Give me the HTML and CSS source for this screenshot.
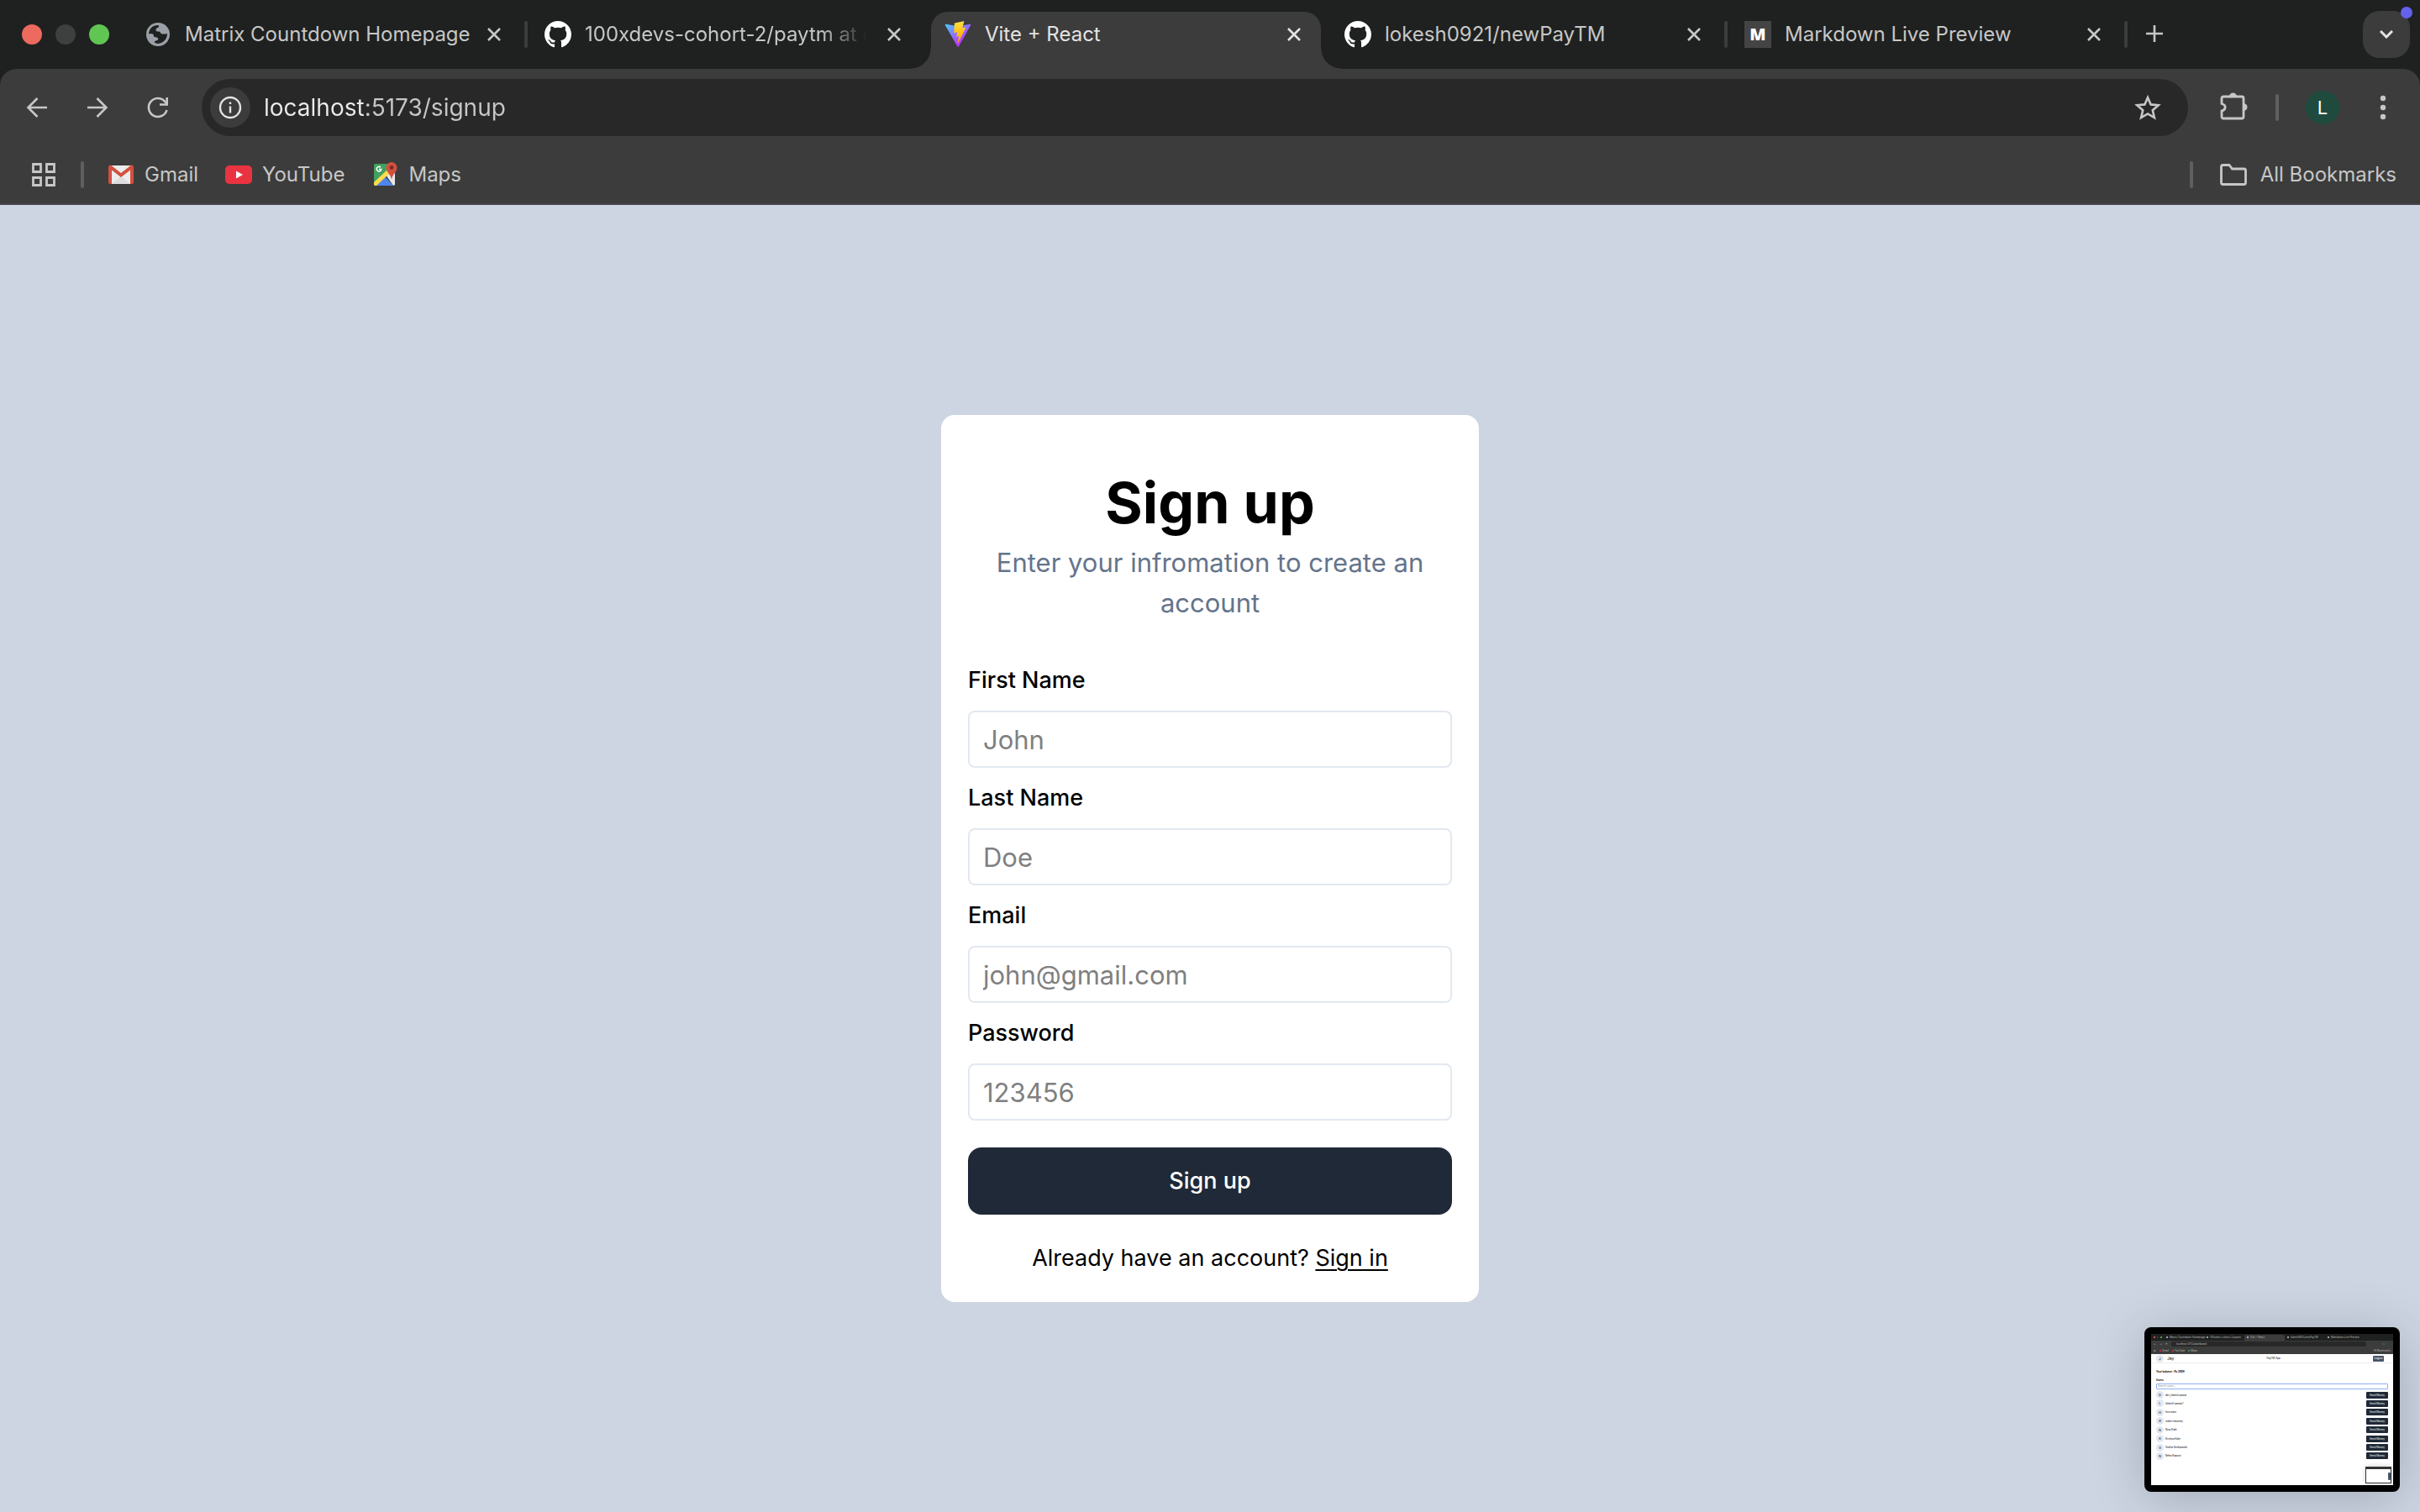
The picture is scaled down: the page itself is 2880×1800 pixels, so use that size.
FILE: index.html
```html
<!DOCTYPE html>
<html lang="en">
<head>
<meta charset="utf-8">
<title>Vite + React</title>
<link rel="stylesheet" href="styles.css">
</head>
<body>
<svg class="defs" aria-hidden="true">
  <defs>
    <linearGradient id="vite-a" x1="6" y1="33" x2="235" y2="344" gradientUnits="userSpaceOnUse"><stop stop-color="#41d1ff"/><stop offset="1" stop-color="#bd34fe"/></linearGradient>
    <linearGradient id="vite-b" x1="194" y1="8" x2="236" y2="292" gradientUnits="userSpaceOnUse"><stop stop-color="#ffea83"/><stop offset=".08" stop-color="#ffdd35"/><stop offset="1" stop-color="#ffa800"/></linearGradient>
    <symbol id="close" viewBox="0 0 16 16"><path d="M1 1 15 15M15 1 1 15" fill="none" stroke="currentColor" stroke-width="2.6"/></symbol>
    <symbol id="github" viewBox="0 0 16 16"><path fill="#fff" d="M8 0C3.58 0 0 3.58 0 8c0 3.54 2.29 6.53 5.47 7.59.4.07.55-.17.55-.38 0-.19-.01-.82-.01-1.49-2.01.37-2.53-.49-2.69-.94-.09-.23-.48-.94-.82-1.13-.28-.15-.68-.52-.01-.53.63-.01 1.08.58 1.23.82.72 1.21 1.87.87 2.33.66.07-.52.28-.87.51-1.07-1.78-.2-3.64-.89-3.64-3.95 0-.87.31-1.59.82-2.15-.08-.2-.36-1.02.08-2.12 0 0 .67-.21 2.2.82.64-.18 1.32-.27 2-.27.68 0 1.36.09 2 .27 1.53-1.04 2.2-.82 2.2-.82.44 1.1.16 1.92.08 2.12.51.56.82 1.27.82 2.15 0 3.07-1.87 3.75-3.65 3.95.29.25.54.73.54 1.48 0 1.07-.01 1.93-.01 2.2 0 .21.15.46.55.38A8.01 8.01 0 0 0 16 8c0-4.42-3.58-8-8-8z"/></symbol>
    <symbol id="vite" viewBox="0 0 410 404"><path fill="url(#vite-a)" d="M399.6 59.5 215.6 388.5c-3.8 6.8-13.5 6.9-17.4.1L10.6 59.6C6.4 52.2 12.7 43.3 21 44.8l184.2 32.9c1.2.2 2.4.2 3.6 0l180.3-32.9c8.3-1.5 14.7 7.3 10.5 14.7Z"/><path fill="url(#vite-b)" d="M293 1.6 156.8 28.3c-2.2.4-3.9 2.3-4 4.6l-8.4 141.4c-.2 3.4 2.9 6 6.1 5.2l37.9-8.8c3.6-.8 6.8 2.3 6 5.9l-11.2 55.2c-.8 3.7 2.7 6.9 6.3 5.8l23.4-7.1c3.7-1.1 7.2 2 6.4 5.8l-17.9 86.6c-1.1 5.4 6.1 8.3 9.1 3.7l2-3.1L323.5 102c1.8-3.7-1.4-7.9-5.5-7.1l-39 7.6c-3.7.7-6.8-2.7-5.7-6.3L298.7 7.9c1.1-3.6-2.1-7-5.7-6.3Z"/></symbol>
  </defs>
</svg>

<header class="browser">
  <nav class="tabstrip" aria-label="Tabs">
    <div class="lights"><span class="light light-red"></span><span class="light light-off"></span><span class="light light-green"></span></div>
    <div class="tab">
      <svg class="favicon" viewBox="0 0 32 32"><circle cx="16" cy="16" r="14" fill="#9aa0a6"/><path fill="#1f2120" d="M5 15.5C5.400 9 10 5 15.500 5c1.500 0 2.500 1.500 1 2.500-1.500 1-3 1-3 3s1.500 2 4 2c1.500 0 1.500 3 3.500 3h4.500c2-.5 1.500-1 1.300-2 1.200 7-4 13-11 13.500-1-.5-3.500-.5-4-1.500-.2-1.600 1.700-2 3.200-2.500 2-.8 1.500-3-.5-3.500-2-.3-3.500 0-3.500-1.500 0-2-1-3-3.500-3-1.500 0-2 .8-2.500.5Z"/></svg>
      <span class="tab-title">Matrix Countdown Homepage</span>
      <button class="tab-close" aria-label="Close tab"><svg><use href="#close"/></svg></button>
      <span class="divider"></span>
    </div>
    <div class="tab">
      <svg class="favicon"><use href="#github"/></svg>
      <span class="tab-title tab-title-long">100xdevs-cohort-2/paytm at c</span>
      <button class="tab-close" aria-label="Close tab"><svg><use href="#close"/></svg></button>
      <span class="divider divider-none"></span>
    </div>
    <div class="tab tab-active">
      <svg class="favicon"><use href="#vite"/></svg>
      <span class="tab-title">Vite + React</span>
      <button class="tab-close" aria-label="Close tab"><svg><use href="#close"/></svg></button>
      <span class="divider divider-none"></span>
    </div>
    <div class="tab">
      <svg class="favicon"><use href="#github"/></svg>
      <span class="tab-title">lokesh0921/newPayTM</span>
      <button class="tab-close" aria-label="Close tab"><svg><use href="#close"/></svg></button>
      <span class="divider"></span>
    </div>
    <div class="tab">
      <span class="favicon favicon-m">M</span>
      <span class="tab-title">Markdown Live Preview</span>
      <button class="tab-close" aria-label="Close tab"><svg><use href="#close"/></svg></button>
      <span class="divider"></span>
    </div>
    <button class="new-tab" aria-label="New tab"><svg viewBox="0 0 20 20"><path d="M10 0v20M0 10h20" stroke="currentColor" stroke-width="2.600"/></svg></button>
    <button class="tab-search" aria-label="Search tabs"><svg viewBox="0 0 16 10"><path d="m1 1 7 7 7-7" fill="none" stroke="currentColor" stroke-width="3"/></svg><span class="dot"></span></button>
  </nav>

  <div class="toolbar">
    <button class="tool" aria-label="Back"><svg viewBox="0 0 32 32"><path d="M28 16H6M16.500 5 5.500 16l11 11" fill="none" stroke="currentColor" stroke-width="2.600"/></svg></button>
    <button class="tool" aria-label="Forward"><svg viewBox="0 0 32 32"><path d="M4 16h22M15.500 5l11 11-11 11" fill="none" stroke="currentColor" stroke-width="2.600"/></svg></button>
    <button class="tool tool-reload" aria-label="Reload"><svg viewBox="0 0 32 32"><path d="M26.500 19A11 11 0 1 1 24 8.500l2 2.500" fill="none" stroke="currentColor" stroke-width="2.600"/><path d="M26.700 4v8.500H18" fill="none" stroke="currentColor" stroke-width="2.600"/></svg></button>
    <div class="omnibox">
      <button class="site-info" aria-label="View site information"><svg viewBox="0 0 28 28"><circle cx="14" cy="14" r="12" fill="none" stroke="currentColor" stroke-width="2.400"/><path d="M14 12.500v8M14 7.500v2.600" stroke="currentColor" stroke-width="2.400"/></svg></button>
      <input class="url" type="text" aria-label="Address" value="localhost:5173/signup">
      <button class="tool" aria-label="Bookmark this tab"><svg viewBox="0 0 32 32"><path d="m16 4 3.600 8.400 9.100.8-6.900 6 2.100 8.900L16 23.400l-7.900 4.700 2.100-8.900-6.900-6 9.100-.8z" fill="none" stroke="currentColor" stroke-width="2.600"/></svg></button>
    </div>
    <button class="tool tool-ext" aria-label="Extensions"><svg viewBox="0 0 36 36"><path d="M4 7a2 2 0 0 1 2-2h22a2 2 0 0 1 2 2v22a2 2 0 0 1-2 2H6a2 2 0 0 1-2-2v-7c5-1 6-7 0-8.500Z" fill="none" stroke="currentColor" stroke-width="2.800"/><path d="M13 5c0-6 9-6 9 0ZM30 13c6 0 6 9 0 9Z" fill="currentColor"/></svg></button>
    <span class="divider divider-light"></span>
    <button class="avatar" aria-label="Profile">L</button>
    <button class="tool tool-menu" aria-label="Menu"><svg viewBox="0 0 32 32"><circle cx="16" cy="5" r="3.200" fill="currentColor"/><circle cx="16" cy="16" r="3.200" fill="currentColor"/><circle cx="16" cy="27" r="3.200" fill="currentColor"/></svg></button>
  </div>

  <nav class="bookmarks" aria-label="Bookmarks">
    <button class="apps" aria-label="Apps"><svg viewBox="0 0 28 28"><path d="M1.500 1.500h9v9h-9zM17.500 1.500h9v9h-9zM1.500 17.500h9v9h-9zM17.500 17.500h9v9h-9z" fill="none" stroke="currentColor" stroke-width="2.800"/></svg></button>
    <span class="divider divider-light"></span>
    <a class="bookmark" href="#"><svg viewBox="0 0 32 32"><path fill="#ececec" d="M3 5h26v22H3z"/><path fill="#dcdcdc" d="M5 27 16 18l11 9z"/><path fill="#d3503f" d="M1 7c0-2 2-3 3.500-2L16 14 27.500 5C29 4 31 5 31 7v18c0 1-1 2-2 2h-2V10.500L16 19 5 10.500V27H3c-1 0-2-1-2-2z"/></svg>Gmail</a>
    <a class="bookmark" href="#"><svg viewBox="0 0 32 32"><rect y="5" width="32" height="22" rx="5" fill="#ea3340"/><path fill="#fff" d="m13 11.500 8 4.500-8 4.500z"/></svg>YouTube</a>
    <a class="bookmark" href="#"><svg viewBox="0 0 32 32"><path fill="#43a060" d="M4 3h21v8L5 28H3V4z"/><path fill="#e8e8e8" d="m17 16 8-7 3 4v15l-2 1z"/><path fill="#4f86ec" d="m5 29 11-11 10 11z"/><path fill="#fbdc4b" d="M3 25 19 10l3 4L6 29H4l-1-1z"/><path fill="none" stroke="#fff" stroke-width="1.500" d="M11 7.200a2.800 2.800 0 1 0 .8 2.300H9"/><path fill="#d3503f" d="M24 1a6.500 6.500 0 0 1 6.500 6.500C30.500 13 25 15 24 22c-1-7-6.500-9-6.500-14.500A6.500 6.500 0 0 1 24 1z"/><circle cx="24" cy="7.500" r="2.400" fill="#7c2b24"/></svg>Maps</a>
    <span class="divider divider-light push"></span>
    <a class="bookmark bookmark-all" href="#"><svg viewBox="0 0 32 32"><path d="M1.500 6.500c0-1.500.5-2 2-2H11L14.500 9H28.500c1.500 0 2 .5 2 2v14.500c0 1.500-.5 2-2 2h-25c-1.500 0-2-.5-2-2z" fill="none" stroke="currentColor" stroke-width="2.800"/></svg>All Bookmarks</a>
  </nav>
</header>

<main class="page">
  <form class="card">
    <h1>Sign up</h1>
    <p class="subtitle">Enter your infromation to create an account</p>
    <label for="first">First Name</label>
    <input id="first" type="text" placeholder="John">
    <label for="last">Last Name</label>
    <input id="last" type="text" placeholder="Doe">
    <label for="email">Email</label>
    <input id="email" type="email" placeholder="john@gmail.com">
    <label for="password">Password</label>
    <input id="password" type="password" placeholder="123456">
    <button class="submit" type="button">Sign up</button>
    <p class="footnote">Already have an account? <a href="#">Sign in</a></p>
  </form>
</main>

<aside class="thumb" aria-label="Screenshot preview">
  <div class="mini">
    <div class="mini-tabs">
      <span class="mini-lights"><i class="light-red"></i><i class="light-off"></i><i class="light-green"></i></span>
      <span class="mini-tab"><i></i>Matrix Countdown Homepage</span>
      <span class="mini-tab"><i></i>100xdevs-cohort-2/paytm</span>
      <span class="mini-tab mini-on"><i></i>Vite + React</span>
      <span class="mini-tab"><i></i>lokesh0921/newPayTM</span>
      <span class="mini-tab"><i></i>Markdown Live Preview</span>
    </div>
    <div class="mini-bar"><span>←</span><span>→</span><span>⟳</span><span class="mini-url">localhost:5173/dashboard</span><i class="mini-face"></i></div>
    <div class="mini-marks"><span>⊞</span><span><i class="red"></i>Gmail</span><span><i class="red"></i>YouTube</span><span><i class="green"></i>Maps</span><span class="push">All Bookmarks</span></div>
    <div class="mini-head"><span class="mini-avatar">J</span><span class="mini-name">Jay</span><span class="mini-app">PayTM App</span><span class="mini-logout">Logout</span></div>
    <div class="mini-body">
      <b>Your balance : Rs 2009</b>
      <b>Users</b>
      <div class="mini-search">Search users...</div>
      <div class="mini-rows">
        <div class="mini-row"><span class="mini-avatar">D</span>dev_lokesh pawar<span class="mini-send">Send Money</span></div>
        <div class="mini-row"><span class="mini-avatar">L</span>lokesh1 pawar1<span class="mini-send">Send Money</span></div>
        <div class="mini-row"><span class="mini-avatar">H</span>hira mani<span class="mini-send">Send Money</span></div>
        <div class="mini-row"><span class="mini-avatar">R</span>robert downey<span class="mini-send">Send Money</span></div>
        <div class="mini-row"><span class="mini-avatar">N</span>Niraj Kale<span class="mini-send">Send Money</span></div>
        <div class="mini-row"><span class="mini-avatar">K</span>Krishna Kale<span class="mini-send">Send Money</span></div>
        <div class="mini-row"><span class="mini-avatar">S</span>Sneha Deshpande<span class="mini-send">Send Money</span></div>
        <div class="mini-row"><span class="mini-avatar">N</span>Neha Kapoor<span class="mini-send">Send Money</span></div>
      </div>
    </div>
    <div class="mini-thumb"><i></i></div>
  </div>
</aside>
</body>
</html>
```
FILE: styles.css
```css
*, *::before, *::after { box-sizing: border-box; }
body {
  margin: 0;
  min-height: 100vh;
  display: flex;
  flex-direction: column;
  background: #cdd5e3;
  font-family: Inter, "Liberation Sans", sans-serif;
  color: #000;
}
h1, p { margin: 0; }
svg { display: block; }
button { border: 0; padding: 0; margin: 0; background: none; color: inherit; font: inherit; }
.defs { position: absolute; width: 0; height: 0; }

/* Browser chrome */
.browser { background: #1f2120; color: #c7c7c7; font-size: 24px; line-height: 32px; }
.tabstrip { display: flex; align-items: center; height: 82px; padding-right: 12px; }
.lights { display: flex; gap: 16px; padding: 0 22px 0 26px; }
.light { width: 24px; height: 24px; border-radius: 50%; }
.light-red { background: #ed6a5e; }
.light-off { background: #3e403f; }
.light-green { background: #61c554; }
.tab { flex: 0 1 476px; min-width: 0; display: flex; align-items: center; height: 68px; padding-left: 20px; }
.favicon { flex: none; width: 32px; height: 32px; margin-right: 16px; }
.favicon-m { background: #444; color: #fff; font: 800 20px/32px "Open Sans", sans-serif; text-align: center; }
.tab-title {
  flex: 1;
  min-width: 0;
  overflow: hidden;
  white-space: nowrap;
  margin-right: 16px;
}
.tab-title-long { mask-image: linear-gradient(90deg, #000 calc(100% - 64px), transparent calc(100% - 8px)); }
.tab-close { flex: none; margin-right: 28px; }
.tab-close svg { width: 16px; height: 16px; }
.divider { flex: none; width: 4px; height: 32px; border-radius: 2px; background: #3c3c3c; }
.divider-light { background: #5f5f5f; }
.divider-none { background: none; }
.tab-active { position: relative; align-self: flex-end; padding-bottom: 14px; color: #e3e3e3; }
.tab-active > * { position: relative; }
.tab-active::before {
  content: "";
  position: absolute;
  inset: 0 8px 0 4px;
  border-radius: 20px 20px 0 0;
  background: #3c3c3c;
}
.tab-active::after {
  content: "";
  position: absolute;
  left: -20px;
  right: -16px;
  bottom: 0;
  height: 24px;
  background:
    radial-gradient(circle at 0 0, transparent 23px, #3c3c3c 24px) left / 24px 24px no-repeat,
    radial-gradient(circle at 100% 0, transparent 23px, #3c3c3c 24px) right / 24px 24px no-repeat;
}
.new-tab { margin-left: 22px; padding-bottom: 2px; }
.new-tab svg { width: 20px; height: 20px; }
.tab-search {
  position: relative;
  display: grid;
  place-items: center;
  width: 56px;
  height: 56px;
  margin-left: auto;
  border-radius: 20px;
  background: #3c3c3c;
  color: #e3e3e3;
}
.tab-search svg { width: 16px; height: 10px; }
.dot { position: absolute; top: -5px; right: -3px; width: 14px; height: 14px; border-radius: 50%; background: #6461ec; }

.toolbar {
  display: flex;
  align-items: center;
  padding: 12px 28px 0;
  border-radius: 20px 20px 0 0;
  background: #3c3c3c;
}
.tool { flex: none; margin-right: 40px; }
.tool svg { width: 32px; height: 32px; }
.tool-reload { margin-right: 36px; }
.omnibox {
  flex: 1;
  display: flex;
  align-items: center;
  height: 68px;
  margin-right: 36px;
  padding-left: 10px;
  border-radius: 34px;
  background: #282828;
}
.omnibox .tool { margin-right: 32px; }
.site-info { display: grid; place-items: center; width: 48px; height: 48px; border-radius: 50%; background: #3c3c3c; color: #e3e3e3; }
.site-info svg { width: 28px; height: 28px; }
.url {
  flex: 1;
  min-width: 0;
  border: 0;
  padding: 0 16px;
  outline: 0;
  font: 400 28px/36px Inter, sans-serif;
  color: #c7c7c7;
  -webkit-text-fill-color: transparent;
  background: linear-gradient(90deg, #ececec 136px, #c7c7c7 136px);
  background-clip: text;
}
.tool-ext { margin-right: 32px; }
.tool-ext svg { width: 36px; height: 36px; }
.avatar { width: 40px; height: 40px; margin: 0 36px 0 32px; border-radius: 50%; background: #1f4b3f; color: #fff; font-size: 22px; }
.tool-menu { margin-right: 0; }

.bookmarks {
  display: flex;
  align-items: center;
  padding: 30px 28px 18px 38px;
  background: #3c3c3c;
  border-bottom: 2px solid #48454b;
}
.apps svg { width: 28px; height: 28px; }
.apps { margin-right: 30px; }
.bookmark { display: flex; align-items: center; gap: 12px; margin-left: 32px; color: inherit; text-decoration: none; }
.bookmark svg { width: 32px; height: 32px; }
.divider + .bookmark { margin-left: 28px; }
.push { margin-left: auto; }
.divider + .bookmark-all { margin-left: 32px; gap: 16px; }

/* Sign-up page */
.page { flex: 1; display: grid; place-items: center; }
.card {
  display: flex;
  flex-direction: column;
  width: 640px;
  max-width: 100%;
  padding: 64px 32px 32px;
  border-radius: 16px;
  background: #fff;
  font-size: 27px;
  line-height: 40px;
}
.card h1 { font-size: 68px; line-height: 80px; font-weight: 700; text-align: center; }
.subtitle { padding: 8px 32px 32px; font-size: 31px; line-height: 48px; text-align: center; color: #64748b; }
.card label { padding: 16px 0; font-weight: 500; }
.card input {
  width: 100%;
  height: 68px;
  padding: 0 16px;
  border: 2px solid #e2e8f0;
  border-radius: 8px;
  background: #fff;
  font: 400 31px/48px Inter, sans-serif;
}
.card input::placeholder { color: #808080; opacity: 1; }
.submit { height: 80px; margin: 32px 0; border-radius: 16px; background: #1f2937; color: #fff; font-weight: 500; }
.footnote { text-align: center; }
.footnote a { color: inherit; text-underline-offset: 4px; text-decoration-thickness: 2px; }

/* Floating screenshot preview */
.thumb {
  position: fixed;
  right: 24px;
  bottom: 24px;
  padding: 8px;
  border-radius: 8px;
  background: #000;
  box-shadow: 0 8px 64px rgba(0, 0, 0, .2);
}
.mini { position: relative; width: 288px; height: 180px; overflow: hidden; background: #fff; font-size: 3px; line-height: 4px; white-space: nowrap; }
.mini i { flex: none; display: block; width: 2px; height: 2px; border-radius: 1px; background: #ccc; }
.mini-tabs, .mini-bar, .mini-marks { display: flex; align-items: center; height: 8px; color: #bbb; }
.mini-tabs { background: #1f2120; }
.mini-lights { flex: none; display: flex; gap: 2px; padding: 0 2px 0 3px; }
.mini .light-red { background: #ed6a5e; }
.mini .light-off { background: #3e403f; }
.mini .light-green { background: #61c554; }
.mini-tab { flex: none; display: flex; align-items: center; gap: 2px; width: 48px; height: 7px; padding-left: 3px; }
.mini-on { background: #3c3c3c; border-radius: 2px 2px 0 0; }
.mini-bar { gap: 4px; padding: 0 10px 0 3px; background: #3c3c3c; }
.mini-url { flex: 1; margin-right: 16px; padding-left: 6px; height: 6px; line-height: 6px; border-radius: 3px; background: #282828; }
.mini-bar .mini-face { background: #1f7a5f; }
.mini-marks { gap: 4px; padding: 0 3px; background: #3c3c3c; }
.mini-marks span { display: flex; align-items: center; gap: 1px; }
.mini .red { background: #ea3340; }
.mini .green { background: #43a060; }
.mini-head { display: flex; align-items: center; height: 11px; padding: 0 11px 0 6px; border-bottom: 1px solid #eee; }
.mini-avatar { flex: none; width: 9px; height: 9px; border-radius: 50%; background: #e2e8f0; font-size: 4px; line-height: 9px; text-align: center; }
.mini-name { margin-left: 4px; font-size: 5px; }
.mini-app { margin: 0 auto; }
.mini-logout { width: 13px; height: 7px; border-radius: 1px; background: #475569; color: #fff; line-height: 7px; text-align: center; }
.mini-body { display: flex; flex-direction: column; gap: 2px; padding: 8px 6px 0; }
.mini-body b + b { padding-top: 4px; }
.mini-search { height: 7px; padding-left: 1px; border: 1px solid #8fb0f5; border-radius: 1px; line-height: 5px; color: #888; }
.mini-rows { display: flex; flex-direction: column; justify-content: space-between; height: 82px; }
.mini-row { display: flex; align-items: center; gap: 2px; }
.mini-send { width: 26px; height: 8px; margin-left: auto; border-radius: 1px; background: #1f2937; color: #fff; line-height: 8px; text-align: center; }
.mini-thumb { position: absolute; right: 2px; bottom: 2px; width: 31px; height: 20px; padding-left: 26px; border: 1px solid #333; border-top-width: 3px; background: #fff; box-shadow: 0 0 6px rgba(0, 0, 0, .2); }
.mini-thumb i { width: 3px; height: 9px; margin-top: 4px; background: #475569; }
```
